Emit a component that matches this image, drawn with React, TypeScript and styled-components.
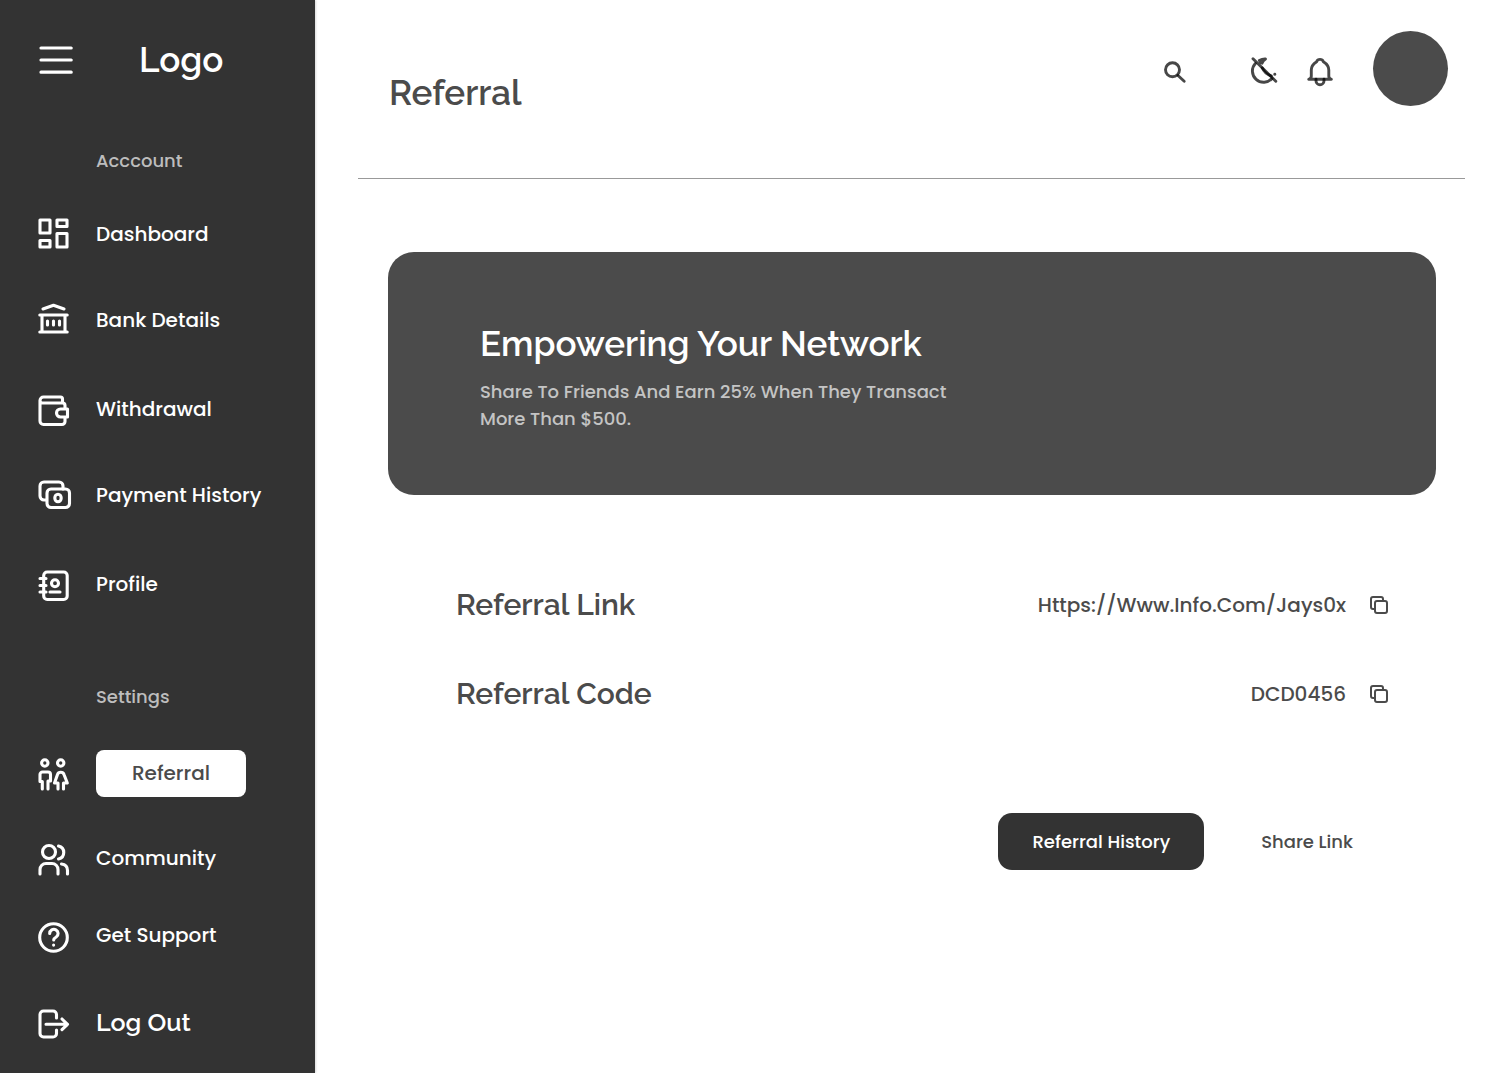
import React from "react";
import styled, { createGlobalStyle } from "styled-components";

const ink = "#4b4b4b";
const dark = "#333333";
const body = `"Poppins", Inter, "Noto Sans", sans-serif`;
const display = `"Raleway", Inter, "Open Sans", sans-serif`;

const GlobalStyle = createGlobalStyle`
  *, *::before, *::after { box-sizing: border-box; }
  body { margin: 0; background: #fff; font-family: ${body}; font-weight: 500; color: ${ink}; }
  h1, h2, h3, p, ul, dl, dd, dt { margin: 0; padding: 0; }
  ul { list-style: none; }
  button { font: inherit; color: inherit; background: none; border: 0; padding: 0; cursor: pointer; }
  a { color: inherit; text-decoration: none; }
  svg { display: block; flex: none; overflow: visible; }
`;

const Page = styled.div`
  display: grid;
  grid-template-columns: 315px minmax(0, 1fr);
  min-height: 100vh;
`;

const Sidebar = styled.aside`
  background: ${dark};
  color: #fff;
  padding: 40px 28px 32px 38px;
  box-shadow: 1px 0 2px rgba(0, 0, 0, 0.15);
`;

const Brand = styled.div`
  display: flex;
  align-items: center;
  gap: 65px;
  height: 40px;
`;

const Logo = styled.span`
  font: 600 35px/40px ${display};
`;

const SectionLabel = styled.h2<{ $top: number; $bottom: number }>`
  margin: ${(p) => p.$top}px 0 ${(p) => p.$bottom}px 58px;
  font-size: 18px;
  font-weight: 500;
  line-height: 28px;
  color: #bdbdbd;
`;

const NavList = styled.ul<{ $gap: number; $pairGap?: number }>`
  display: flex;
  flex-direction: column;
  gap: ${(p) => p.$gap}px;

  li:nth-child(even) {
    margin-bottom: ${(p) => p.$pairGap ?? 0}px;
  }
`;

const NavLink = styled.a`
  display: flex;
  align-items: center;
  gap: 26px;
  min-height: 32px;
  font-size: 20px;
  line-height: 30px;
`;

const Pill = styled.span`
  width: 150px;
  border-radius: 8px;
  background: #fff;
  color: ${ink};
  line-height: 47px;
  text-align: center;
`;

const LogOut = styled.button`
  display: flex;
  align-items: center;
  gap: 26px;
  margin-top: 55px;
  font: 600 25px/32px ${display};
`;

const Main = styled.main`
  padding: 0 47px 48px 43px;
`;

const Header = styled.header`
  display: flex;
  justify-content: space-between;
  align-items: flex-start;
  height: 179px;
  padding: 31px 17px 0 31px;
  border-bottom: 1px solid #999;
`;

const Title = styled.h1`
  margin-top: 40px;
  font: 600 35px/44px ${display};
`;

const Actions = styled.div`
  display: flex;
  align-items: center;
  gap: 37px;
`;

const Tools = styled.div`
  display: flex;
  align-items: center;
  gap: 24px;
  padding-top: 7px;
`;

const SearchButton = styled.button`
  margin-right: 37px;
`;

const Avatar = styled.button`
  width: 75px;
  height: 75px;
  border-radius: 50%;
  background: ${ink};
`;

const Content = styled.div`
  padding: 73px 29px 0 30px;
`;

const Banner = styled.section`
  border-radius: 26px;
  background: ${ink};
  color: #fff;
  padding: 70px 92px 63px;
`;

const BannerTitle = styled.h2`
  font: 600 35px/44px ${display};
`;

const BannerText = styled.p`
  max-width: 490px;
  margin-top: 12px;
  font-size: 18px;
  line-height: 27px;
  color: #c4c4c4;
`;

const Details = styled.dl`
  display: grid;
  gap: 49px;
  margin-top: 90px;
  padding: 0 48px 0 68px;
`;

const DetailRow = styled.div`
  display: flex;
  align-items: center;
  justify-content: space-between;
`;

const DetailName = styled.dt`
  font: 600 30px/40px ${display};
`;

const DetailValue = styled.dd`
  display: flex;
  align-items: center;
  gap: 24px;
  font-size: 20px;
  line-height: 30px;
`;

const ButtonRow = styled.div`
  display: flex;
  justify-content: flex-end;
  gap: 23px;
  margin-top: 99px;
  padding-right: 49px;
`;

const Button = styled.button<{ $filled?: boolean }>`
  padding: 0 34px;
  border-radius: 14px;
  font-size: 18px;
  line-height: 57px;
  background: ${(p) => (p.$filled ? dark : "transparent")};
  color: ${(p) => (p.$filled ? "#fff" : ink)};
`;

type GlyphProps = { children: React.ReactNode; size?: number; w?: number };

const Glyph = ({ children, size = 32, w = 3.1 }: GlyphProps) => (
  <svg width={size} height={size} viewBox={`0 0 ${size} ${size}`} fill="none" stroke="currentColor" strokeWidth={w} strokeLinecap="round" strokeLinejoin="round" aria-hidden="true">
    {children}
  </svg>
);

/* Header icons use translucent black strokes, so they darken where they cross. */
const ToolGlyph = ({ children, size = 32, w = 2.9 }: GlyphProps) => (
  <svg width={size} height={size} viewBox={`0 0 ${size} ${size}`} fill="none" stroke="#000" strokeOpacity="0.72" strokeWidth={w} strokeLinecap="round" strokeLinejoin="round" aria-hidden="true">
    {children}
  </svg>
);

const MenuIcon = () => (
  <svg width="36" height="32" viewBox="0 0 36 32" stroke="currentColor" strokeWidth="3.2" strokeLinecap="round" aria-hidden="true">
    <path d="M3 4h30.200M3 16h30.200M3 28.200h30.200" />
  </svg>
);

const DashboardIcon = () => (
  <Glyph>
    <path d="M2 2h10v13H2zM19 2h10v6.500H19zM19 15.500h10v13.500H19zM2 22.500h10v6.500H2z" />
  </Glyph>
);
const BankIcon = () => (
  <Glyph>
    <path d="M5 5 15.500 1.300 26 5M1.800 11h27.400M1.800 28h27.400M4 11v17M27 11v17M9.500 17v4M15.500 17v4M21.500 17v4" />
  </Glyph>
);
const WalletIcon = () => (
  <Glyph>
    <path d="M2 7.500v20.500a3.500 3.500 0 0 0 3.500 3.500H24a3 3 0 0 0 3-3V24M27 16v-3.500a2.500 2.500 0 0 0-2.500-2.500H4.500A2.500 2.500 0 0 1 2 7.500 3.500 3.500 0 0 1 5.500 4H22.500a2 2 0 0 1 2 2v4M29.500 16H22.500a4 4 0 0 0 0 8h7z" />
  </Glyph>
);
const PaymentIcon = () => (
  <Glyph>
    <path d="M8.500 21H6a4 4 0 0 1-4-4V7a4 4 0 0 1 4-4h15a4 4 0 0 1 4 4v3" />
    <rect x="9" y="10" width="22.500" height="18.500" rx="4" />
    <ellipse cx="20" cy="19" rx="3.200" ry="3.800" />
  </Glyph>
);
const ProfileIcon = () => (
  <Glyph>
    <rect x="5.700" y="4" width="23.500" height="27.500" rx="3.500" />
    <circle cx="17" cy="15.300" r="3.500" />
    <path d="M12 24h10M2 10.500h6M2 17.500h6M2 24h6" />
  </Glyph>
);
const ReferralIcon = () => (
  <Glyph>
    <circle cx="6.800" cy="5" r="3.200" />
    <circle cx="22.700" cy="5" r="3.200" />
    <path d="M4.300 31V23.500H2V16.500a2.500 2.500 0 0 1 2.500-2.500h5.500A2.500 2.500 0 0 1 12.500 16.500v6.500H10V31M20 31v-6H16.500l3-8.500c1-3 5.500-3 6.500 0l3.300 8.500H25.500v6" />
  </Glyph>
);
const CommunityIcon = () => (
  <Glyph>
    <circle cx="11" cy="10" r="6.500" />
    <path d="M2 32v-4.500a6 6 0 0 1 6-6h6a6 6 0 0 1 6 6V32M20.500 4c7 1.500 7 11.500 0 13M23.500 22c4 .5 6 3 6 6.500V32" />
  </Glyph>
);
const SupportIcon = () => (
  <Glyph>
    <circle cx="15.500" cy="18.500" r="13.800" />
    <path d="M11.700 14.500a4.200 4.200 0 1 1 6.500 3.500c-1.700 1-2.500 1.500-2.500 3M15.600 26v.1" />
  </Glyph>
);
const LogOutIcon = () => (
  <Glyph>
    <path d="M18.500 12V8.500a3.500 3.500 0 0 0-3.500-3.500H5.500A3.500 3.500 0 0 0 2 8.500v19a3.500 3.500 0 0 0 3.500 3.500H15a3.500 3.500 0 0 0 3.500-3.500v-3.500M8 18.300h21.500M24 13l5.500 5.300-5.500 5.300" />
  </Glyph>
);
const SearchIcon = () => (
  <ToolGlyph size={24}>
    <circle cx="9.500" cy="9.800" r="7" />
    <path d="m15 15.500 6.200 5.700" />
  </ToolGlyph>
);
const MoonOffIcon = () => (
  <ToolGlyph>
    <path d="M7.300 7.500A10.800 10.800 0 0 0 24 22.500" />
    <path d="M11.300 4.500C13.300 3.300 15.500 2.800 17.500 2.900c-1.600 1-2.800 2.300-3.500 4.300-.8-.2-1.500-.7-2-1.400" />
    <path d="M14.300 12c1.500 3.500 4.500 6.500 9 8" />
    <path d="M26.800 18.300v.1" />
    <path d="M5 2.700 27.800 25.200" />
  </ToolGlyph>
);
const BellIcon = () => (
  <ToolGlyph>
    <path d="M4.700 23.300h22.700c-1.700-.6-2.600-1.400-2.600-3V14c0-4-2.500-6.500-5.400-8.300-.6-1.600-1.800-2.300-3.400-2.300s-2.800.7-3.400 2.300C9.700 7.500 7.300 10 7.300 14v6.300c0 1.600-.9 2.400-2.600 3z" />
    <path d="M12 23.300v1.400a4 4 0 0 0 8 0v-1.400" />
  </ToolGlyph>
);
const CopyIcon = () => (
  <Glyph size={18} w={2}>
    <rect x="5" y="5" width="12" height="12" rx="2" />
    <path d="M4 13H3a2 2 0 0 1-2-2V3a2 2 0 0 1 2-2h8a2 2 0 0 1 2 2v1" />
  </Glyph>
);

const account = [
  { label: "Dashboard", icon: <DashboardIcon /> },
  { label: "Bank Details", icon: <BankIcon /> },
  { label: "Withdrawal", icon: <WalletIcon /> },
  { label: "Payment History", icon: <PaymentIcon /> },
  { label: "Profile", icon: <ProfileIcon /> },
];

const settings = [
  { label: "Referral", icon: <ReferralIcon />, current: true },
  { label: "Community", icon: <CommunityIcon /> },
  { label: "Get Support", icon: <SupportIcon /> },
];

const details = [
  { name: "Referral Link", value: "Https://Www.Info.Com/Jays0x" },
  { name: "Referral Code", value: "DCD0456" },
];

export default function App() {
  return (
    <>
      <GlobalStyle />
      <Page>
        <Sidebar>
          <Brand>
            <button type="button" aria-label="Menu"><MenuIcon /></button>
            <Logo>Logo</Logo>
          </Brand>
          <nav>
            <SectionLabel $top={67} $bottom={43}>Acccount</SectionLabel>
            <NavList $gap={54} $pairGap={3}>
              {account.map((item) => (
                <li key={item.label}>
                  <NavLink href="#">{item.icon}{item.label}</NavLink>
                </li>
              ))}
            </NavList>
            <SectionLabel $top={83} $bottom={39}>Settings</SectionLabel>
            <NavList $gap={45}>
              {settings.map((item) => (
                <li key={item.label}>
                  <NavLink href="#" aria-current={item.current ? "page" : undefined}>
                    {item.icon}
                    {item.current ? <Pill>{item.label}</Pill> : item.label}
                  </NavLink>
                </li>
              ))}
            </NavList>
          </nav>
          <LogOut type="button"><LogOutIcon />Log Out</LogOut>
        </Sidebar>
        <Main>
          <Header>
            <Title>Referral</Title>
            <Actions>
              <Tools>
                <SearchButton type="button" aria-label="Search"><SearchIcon /></SearchButton>
                <button type="button" aria-label="Toggle dark mode"><MoonOffIcon /></button>
                <button type="button" aria-label="Notifications"><BellIcon /></button>
              </Tools>
              <Avatar type="button" aria-label="Your account" />
            </Actions>
          </Header>
          <Content>
            <Banner>
              <BannerTitle>Empowering Your Network</BannerTitle>
              <BannerText>Share To Friends And Earn 25% When They Transact More Than $500.</BannerText>
            </Banner>
            <Details>
              {details.map((row) => (
                <DetailRow key={row.name}>
                  <DetailName>{row.name}</DetailName>
                  <DetailValue>
                    {row.value}
                    <button type="button" aria-label={`Copy ${row.name}`}><CopyIcon /></button>
                  </DetailValue>
                </DetailRow>
              ))}
            </Details>
            <ButtonRow>
              <Button type="button" $filled>Referral History</Button>
              <Button type="button">Share Link</Button>
            </ButtonRow>
          </Content>
        </Main>
      </Page>
    </>
  );
}
